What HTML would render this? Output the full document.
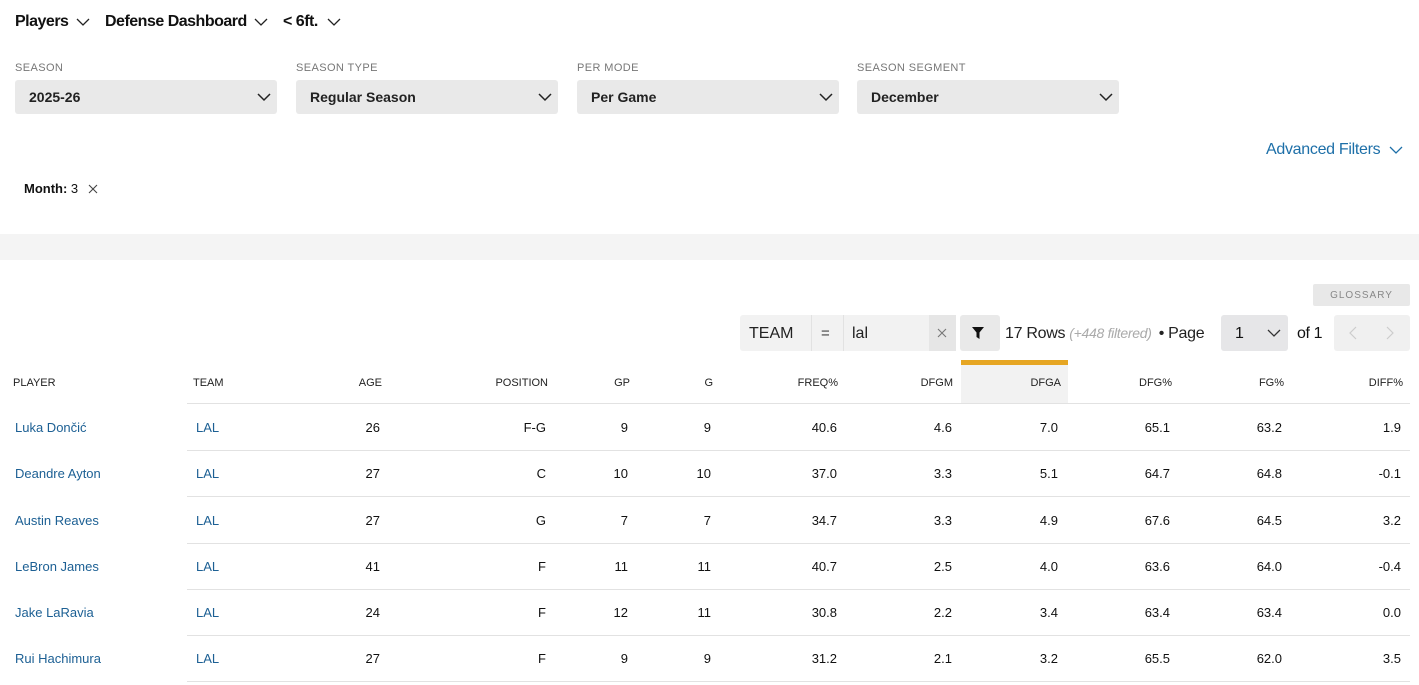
<!DOCTYPE html>
<html><head><meta charset="utf-8"><style>
*{margin:0;padding:0;box-sizing:border-box}
body{width:1419px;height:685px;overflow:hidden;background:#fff;font-family:"Liberation Sans",Arial,sans-serif;color:#111;position:relative}
.a{position:absolute;white-space:nowrap}
.nav{top:13px;font-size:16px;font-weight:bold;letter-spacing:-0.5px}
.lbl{top:62px;font-size:11px;color:#777;letter-spacing:0.4px}
.dd{top:80px;width:262px;height:34px;background:#e9e9e9;border-radius:3px;font-size:14px;font-weight:bold;padding:9px 0 0 14px;color:#222}
.chev{position:absolute}
.h{top:377px;font-size:11px;color:#222}
.r{font-size:13px;color:#111}
.lk{color:#1d6094}
.line{position:absolute;left:187px;width:1223px;height:1px;background:#e2e2e2}
</style></head><body>
<div class="a nav" style="left:15px">Players</div>
<svg class="chev" style="left:76px;top:18px" width="14" height="9"><path d="M1 1l6 6 6-6" fill="none" stroke="#222" stroke-width="1.3"/></svg>
<div class="a nav" style="left:105px">Defense Dashboard</div>
<svg class="chev" style="left:254px;top:18px" width="14" height="9"><path d="M1 1l6 6 6-6" fill="none" stroke="#222" stroke-width="1.3"/></svg>
<div class="a nav" style="left:283px">&lt; 6ft.</div>
<svg class="chev" style="left:327px;top:18px" width="14" height="9"><path d="M1 1l6 6 6-6" fill="none" stroke="#222" stroke-width="1.3"/></svg>

<div class="a lbl" style="left:15px">SEASON</div>
<div class="a lbl" style="left:296px">SEASON TYPE</div>
<div class="a lbl" style="left:577px">PER MODE</div>
<div class="a lbl" style="left:857px">SEASON SEGMENT</div>
<div class="a dd" style="left:15px">2025-26<svg class="chev" style="left:242px;top:13px" width="14" height="9"><path d="M1 1l6 6 6-6" fill="none" stroke="#222" stroke-width="1.5"/></svg></div>
<div class="a dd" style="left:296px">Regular Season<svg class="chev" style="left:242px;top:13px" width="14" height="9"><path d="M1 1l6 6 6-6" fill="none" stroke="#222" stroke-width="1.5"/></svg></div>
<div class="a dd" style="left:577px">Per Game<svg class="chev" style="left:242px;top:13px" width="14" height="9"><path d="M1 1l6 6 6-6" fill="none" stroke="#222" stroke-width="1.5"/></svg></div>
<div class="a dd" style="left:857px">December<svg class="chev" style="left:242px;top:13px" width="14" height="9"><path d="M1 1l6 6 6-6" fill="none" stroke="#222" stroke-width="1.5"/></svg></div>

<div class="a" style="left:1266px;top:141px;font-size:16px;color:#1d6fa8;letter-spacing:-0.3px">Advanced Filters</div>
<svg class="chev" style="left:1389px;top:146px" width="14" height="9"><path d="M1 1l6 6 6-6" fill="none" stroke="#1d6fa8" stroke-width="1.3"/></svg>

<div class="a" style="left:24px;top:181px;font-size:13px"><b>Month:</b> 3</div>
<svg class="chev" style="left:88px;top:184px" width="10" height="10"><path d="M1 1l8 8M9 1l-8 8" stroke="#444" stroke-width="1.1"/></svg>

<div class="a" style="left:0;top:234px;width:1419px;height:26px;background:#f4f4f4"></div>

<div class="a" style="left:1313px;top:284px;width:97px;height:22px;background:#e8e8e8;border-radius:2px;font-size:10px;color:#888;letter-spacing:1px;text-align:center;padding-top:6px">GLOSSARY</div>

<div class="a" style="left:740px;top:315px;width:216px;height:36px;background:#f2f2f2;border-radius:3px"></div>
<div class="a" style="left:811px;top:315px;width:1px;height:36px;background:#e2e2e2"></div>
<div class="a" style="left:843px;top:315px;width:1px;height:36px;background:#e2e2e2"></div>
<div class="a" style="left:929px;top:315px;width:27px;height:36px;background:#e6e6e6"></div>
<div class="a" style="left:749px;top:325px;font-size:16px;color:#222">TEAM</div>
<div class="a" style="left:821px;top:325px;font-size:15px;color:#444">=</div>
<div class="a" style="left:852px;top:325px;font-size:16px;color:#222">lal</div>
<svg class="chev" style="left:937px;top:328px" width="10" height="10"><path d="M1 1l8 8M9 1l-8 8" stroke="#777" stroke-width="1.1"/></svg>
<div class="a" style="left:960px;top:315px;width:40px;height:36px;background:#e9e9e9;border-radius:3px"></div>
<svg class="chev" style="left:972px;top:327px" width="12" height="12"><path d="M0 0h12L7.5 5.5V12L4.5 10V5.5z" fill="#111"/></svg>
<div class="a" style="left:1005px;top:325px;font-size:16px;color:#222;letter-spacing:-0.3px">17 Rows <i style="font-size:14px;color:#aaa">(+448 filtered)</i> <span style="margin-left:3px">• Page</span></div>
<div class="a" style="left:1221px;top:315px;width:67px;height:36px;background:#e6e6e8;border-radius:3px"></div>
<div class="a" style="left:1235px;top:325px;font-size:16px">1</div>
<svg class="chev" style="left:1267px;top:329px" width="14" height="9"><path d="M1 1l6 6 6-6" fill="none" stroke="#333" stroke-width="1.3"/></svg>
<div class="a" style="left:1297px;top:325px;font-size:16px;letter-spacing:-0.4px">of 1</div>
<div class="a" style="left:1334px;top:315px;width:76px;height:36px;background:#f0f0f0;border-radius:3px"></div>
<svg class="chev" style="left:1349px;top:326px" width="8" height="14"><path d="M7 1L1 7l6 6" fill="none" stroke="#ccc" stroke-width="1.2"/></svg>
<svg class="chev" style="left:1386px;top:326px" width="8" height="14"><path d="M1 1l6 6-6 6" fill="none" stroke="#ccc" stroke-width="1.2"/></svg>

<div class="a" style="left:961px;top:360px;width:107px;height:43px;background:#f2f2f2"></div>
<div class="a" style="left:961px;top:360px;width:107px;height:5px;background:#e6a623"></div>

<div class="a h" style="left:13px">PLAYER</div>
<div class="a h" style="left:193px">TEAM</div>
<div class="a h" style="right:1037px">AGE</div>
<div class="a h" style="right:871px">POSITION</div>
<div class="a h" style="right:789px">GP</div>
<div class="a h" style="right:706px">G</div>
<div class="a h" style="right:581px">FREQ%</div>
<div class="a h" style="right:466px">DFGM</div>
<div class="a h" style="right:358px">DFGA</div>
<div class="a h" style="right:247px">DFG%</div>
<div class="a h" style="right:135px">FG%</div>
<div class="a h" style="right:16px">DIFF%</div>
<div class="line" style="top:403px"></div>

<div id="rows"></div>
<script>
var d=[["Luka Dončić","26","F-G","9","9","40.6","4.6","7.0","65.1","63.2","1.9"],
["Deandre Ayton","27","C","10","10","37.0","3.3","5.1","64.7","64.8","-0.1"],
["Austin Reaves","27","G","7","7","34.7","3.3","4.9","67.6","64.5","3.2"],
["LeBron James","41","F","11","11","40.7","2.5","4.0","63.6","64.0","-0.4"],
["Jake LaRavia","24","F","12","11","30.8","2.2","3.4","63.4","63.4","0.0"],
["Rui Hachimura","27","F","9","9","31.2","2.1","3.2","65.5","62.0","3.5"]];
var rt=[1039,873,791,708,582,467,361,249,137,18];
var ys=[427,473,520,566,612,658],h="";
d.forEach(function(r,i){var t=ys[i]-7;
h+='<div class="a r lk" style="left:15px;top:'+t+'px">'+r[0]+'</div><div class="a r lk" style="left:196px;top:'+t+'px">LAL</div>';
for(var j=1;j<r.length;j++)h+='<div class="a r" style="right:'+rt[j-1]+'px;top:'+t+'px">'+r[j]+'</div>';
h+='<div class="line" style="top:'+(ys[i]+23)+'px"></div>';});
document.getElementById("rows").innerHTML=h;
</script>
</body></html>
